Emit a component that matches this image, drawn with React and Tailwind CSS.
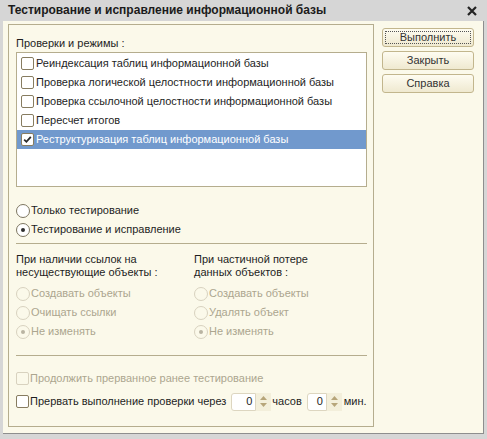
import React from "react";

function Check({ checked = false, disabled = false }) {
  return (
    <span
      className={
        disabled
          ? "w-[13px] h-[13px] shrink-0 rounded-[2px] border border-[#d8d2bf] bg-[#fbf9ea] flex items-center justify-center"
          : "w-[13px] h-[13px] shrink-0 rounded-[2px] border border-[#877c60] bg-white flex items-center justify-center"
      }
    >
      {checked && (
        <svg width="9" height="9" viewBox="0 0 9 9">
          <path d="M1.2 4.6 L3.4 6.8 L7.8 1.8" fill="none" stroke="#2a2a2a" strokeWidth="1.8" />
        </svg>
      )}
    </span>
  );
}

function Radio({ checked = false, disabled = false }) {
  return (
    <span
      className={
        disabled
          ? "w-[14px] h-[14px] shrink-0 rounded-full border border-[#d8d2bf] bg-[#fbf9ea] flex items-center justify-center"
          : "w-[14px] h-[14px] shrink-0 rounded-full border border-[#7d7661] bg-white flex items-center justify-center"
      }
    >
      {checked && (
        <span
          className={
            disabled
              ? "w-[4px] h-[4px] rounded-full bg-[#b9b4a2]"
              : "w-[4px] h-[4px] rounded-full bg-[#2e2e2e]"
          }
        />
      )}
    </span>
  );
}

function RadioRow({ label, checked, disabled }) {
  return (
    <div className="h-[19px] flex items-center">
      <Radio checked={checked} disabled={disabled} />
      <span className={disabled ? "ml-[1px] text-[#aca68f]" : "ml-[1px]"}>{label}</span>
    </div>
  );
}

function Spin({ width }) {
  return (
    <div className="flex h-[18px]">
      <div
        className="h-full bg-white border border-[#ddd6c0] rounded-l-[3px] flex items-center justify-end pr-[3px]"
        style={{ width }}
      >
        0
      </div>
      <div className="w-[15px] h-full bg-[#f3efdb] flex flex-col items-center justify-center gap-[3px]">
        <svg width="7" height="4" viewBox="0 0 7 4">
          <path d="M0 4 L3.5 0 L7 4 Z" fill="#b6a57a" />
        </svg>
        <svg width="7" height="4" viewBox="0 0 7 4">
          <path d="M0 0 L3.5 4 L7 0 Z" fill="#b6a57a" />
        </svg>
      </div>
    </div>
  );
}

function Button({ children, isDefault }) {
  return (
    <div className="h-[19px] rounded-[3px] border border-[#c2b68d] bg-gradient-to-b from-[#fefcf1] to-[#efe9d0] p-[2px]">
      <div
        className={
          isDefault
            ? "h-full border border-dotted border-[#555] flex items-center justify-center text-[#333]"
            : "h-full border border-transparent flex items-center justify-center text-[#333]"
        }
      >
        {children}
      </div>
    </div>
  );
}

export default function App() {
  const rows = [
    { label: "Реиндексация таблиц информационной базы", checked: false },
    { label: "Проверка логической целостности информационной базы", checked: false },
    { label: "Проверка ссылочной целостности информационной базы", checked: false },
    { label: "Пересчет итогов", checked: false },
    { label: "Реструктуризация таблиц информационной базы", checked: true, selected: true },
  ];

  return (
    <div className="w-[487px] h-[439px] bg-[#d6d6d6] flex flex-col font-['Liberation_Sans',Arial,sans-serif] text-[11px] leading-[13px] text-[#1e1e1e]">
      <div className="h-[21px] shrink-0 flex items-center justify-between pl-[8px] pr-[10px]">
        <span className="font-bold text-[12px] text-[#1b1b1b]">
          Тестирование и исправление информационной базы
        </span>
        <svg width="10" height="10" viewBox="0 0 10 10">
          <path d="M1 1 L9 9 M9 1 L1 9" stroke="#222" strokeWidth="2.2" />
        </svg>
      </div>

      <div className="flex-1 ml-[3px] mr-[3px] mb-[5px] bg-[#fbf9ea] border-r border-b border-[#8e8e8e] flex pl-[5px] pt-[3px]">
        <div className="w-[366px] h-[403px] border border-[#b5ad8e] pl-[7px] pt-[12px] flex flex-col">
          <div>Проверки и режимы :</div>
          <div className="mt-[2px] w-[351px] h-[135px] border border-[#b5ad8e] bg-white pt-[1px]">
            {rows.map((r) => (
              <div
                key={r.label}
                className={
                  r.selected
                    ? "h-[19px] flex items-center pl-[4px] bg-[#7199cd] text-white"
                    : "h-[19px] flex items-center pl-[4px]"
                }
              >
                <Check checked={r.checked} />
                <span className="ml-[2px]">{r.label}</span>
              </div>
            ))}
          </div>

          <div className="mt-[14px]">
            <RadioRow label="Только тестирование" />
            <RadioRow label="Тестирование и исправление" checked />
          </div>

          <div className="mt-[4px] w-[351px] h-px bg-[#b5ad8e]" />

          <div className="mt-[9px] flex">
            <div className="w-[178px]">
              <div>При наличии ссылок на</div>
              <div>несуществующие объекты :</div>
              <div className="mt-[5px]">
                <RadioRow label="Создавать объекты" disabled />
                <RadioRow label="Очищать ссылки" disabled />
                <RadioRow label="Не изменять" disabled checked />
              </div>
            </div>
            <div>
              <div>При частичной потере</div>
              <div>данных объектов :</div>
              <div className="mt-[5px]">
                <RadioRow label="Создавать объекты" disabled />
                <RadioRow label="Удалять объект" disabled />
                <RadioRow label="Не изменять" disabled checked />
              </div>
            </div>
          </div>

          <div className="mt-[14px] w-[351px] h-px bg-[#b5ad8e]" />

          <div className="mt-[13px] h-[19px] flex items-center">
            <Check disabled />
            <span className="ml-[1px] text-[#aca68f]">Продолжить прерванное ранее тестирование</span>
          </div>
          <div className="mt-[4px] h-[19px] flex items-center">
            <Check />
            <span className="ml-[1px]">Прервать выполнение проверки через</span>
            <div className="ml-[5px]">
              <Spin width={25} />
            </div>
            <span className="ml-[1px]">часов</span>
            <div className="ml-[5px]">
              <Spin width={20} />
            </div>
            <span className="ml-[2px]">мин.</span>
          </div>
        </div>

        <div className="ml-[8px] mt-[4px] w-[92px] flex flex-col gap-[4px]">
          <Button isDefault>Выполнить</Button>
          <Button>Закрыть</Button>
          <Button>Справка</Button>
        </div>
      </div>
    </div>
  );
}
